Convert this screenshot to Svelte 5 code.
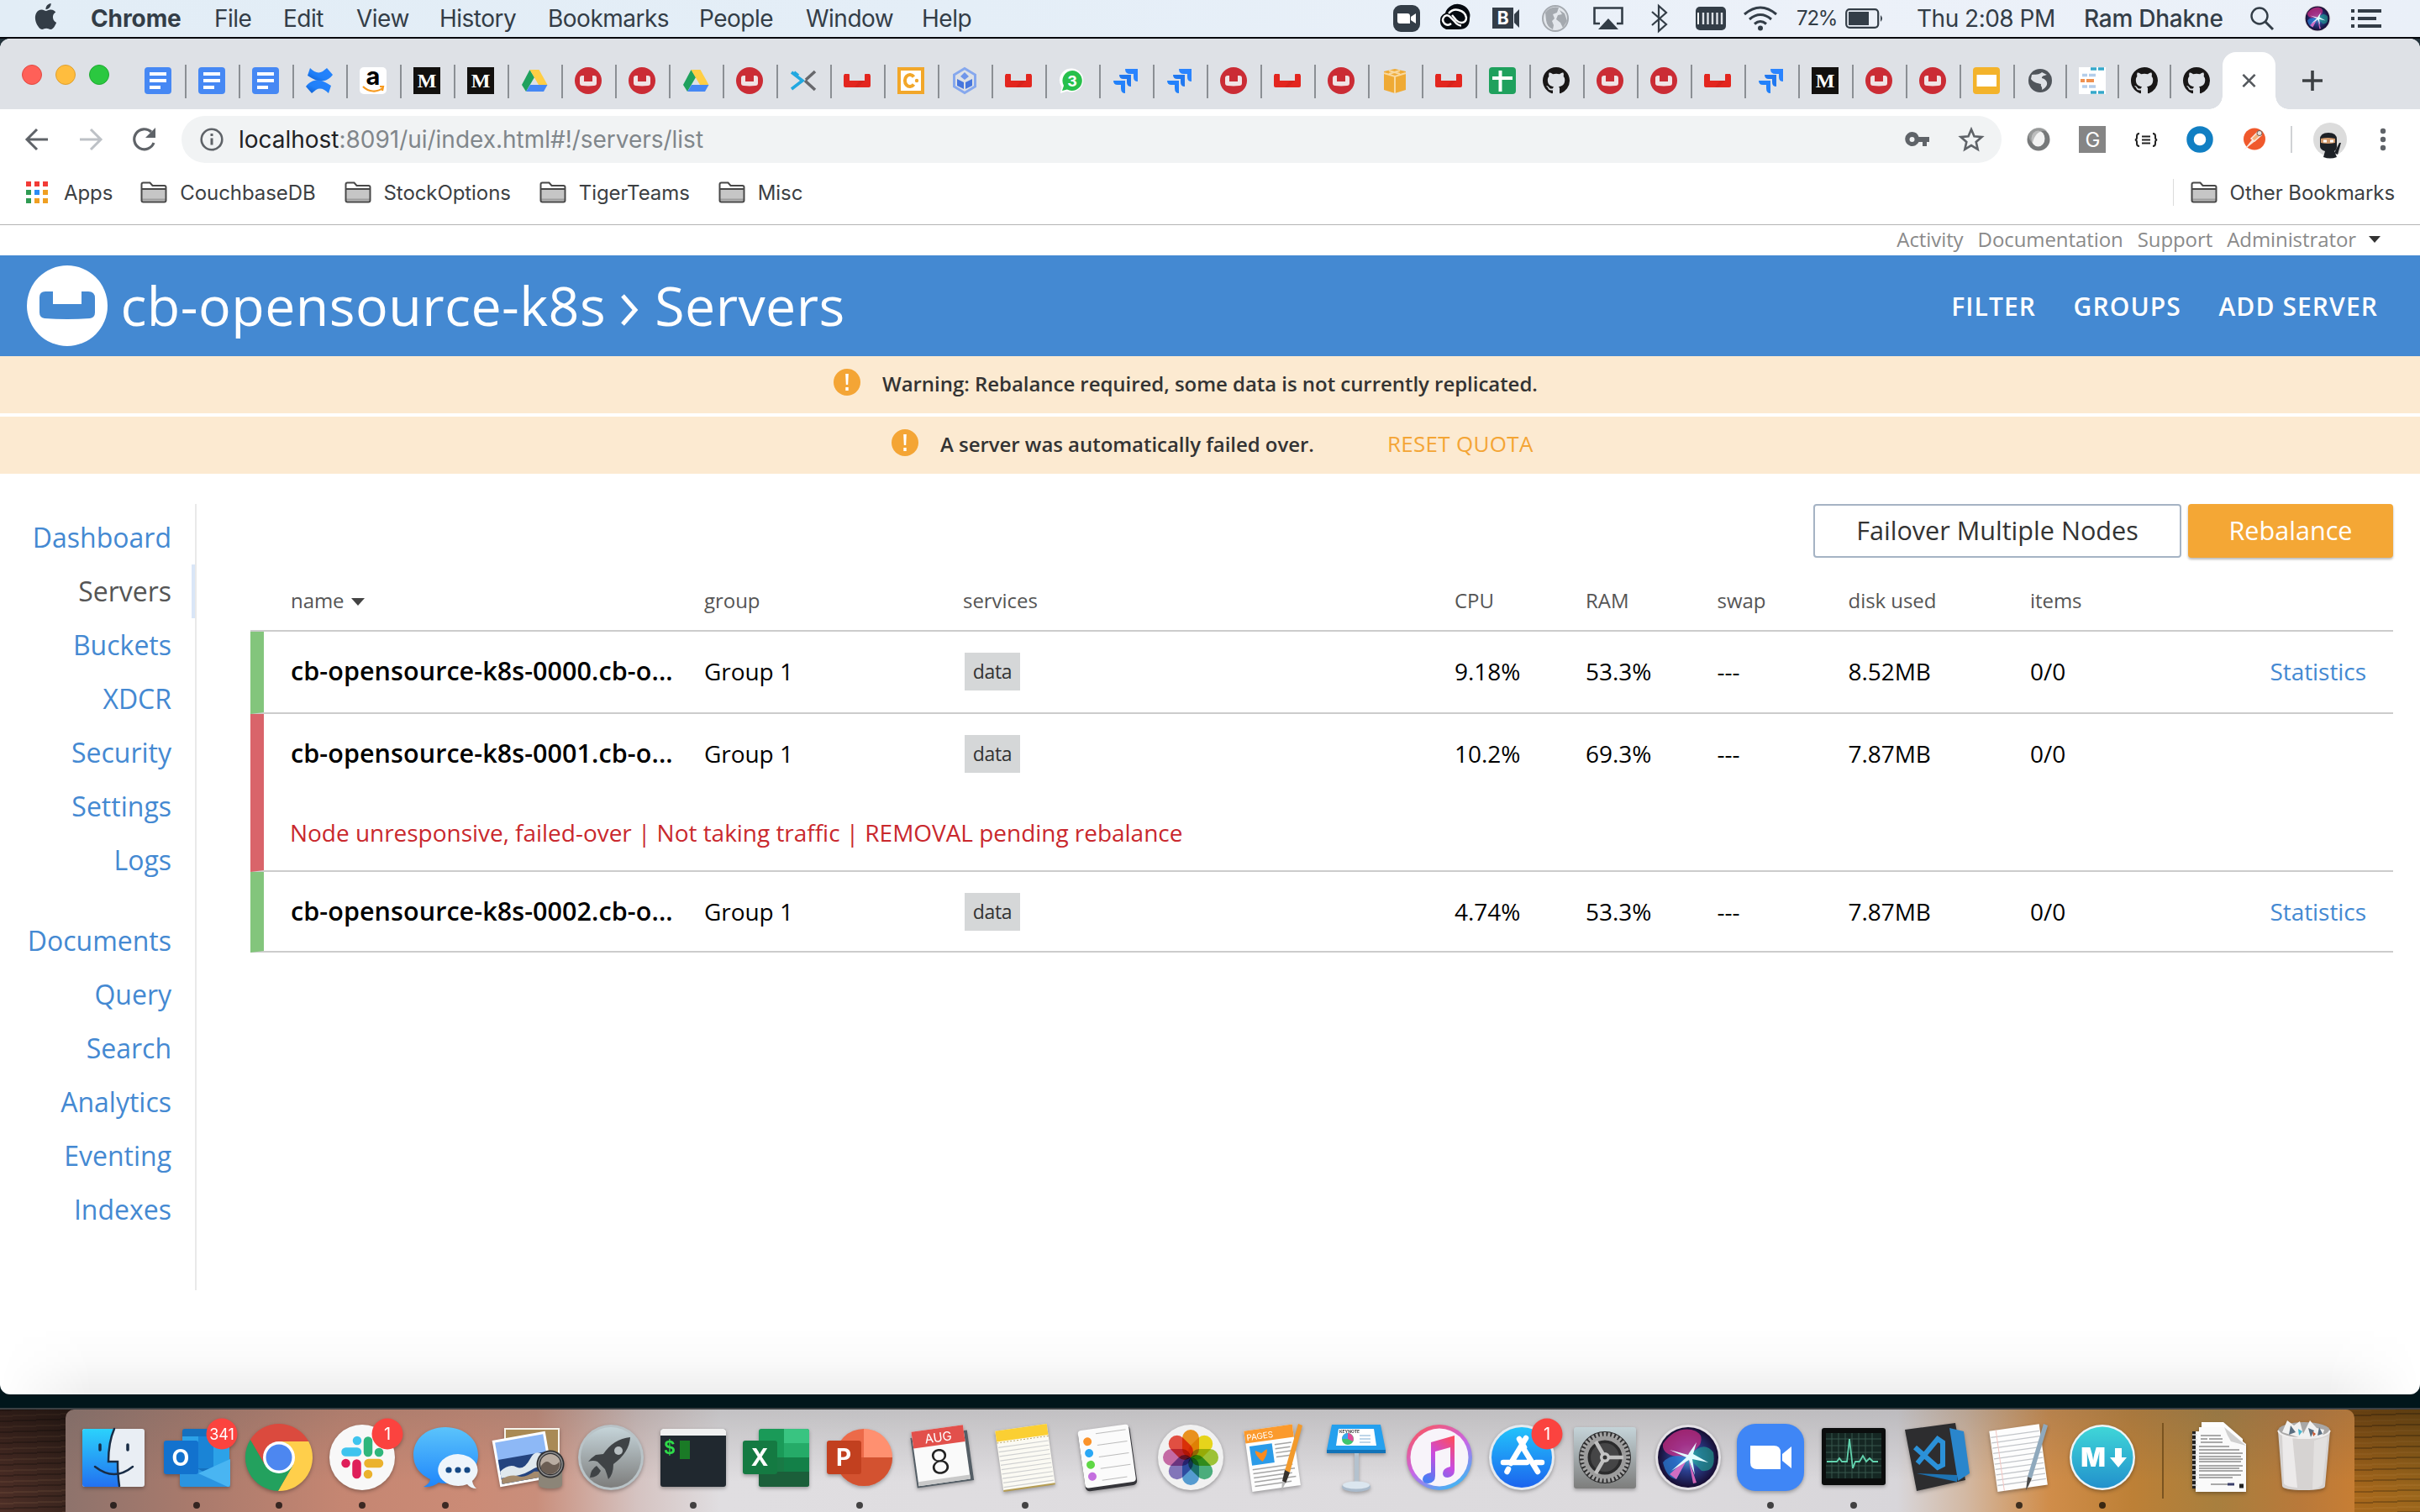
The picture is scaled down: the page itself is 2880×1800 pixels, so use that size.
<script>
  const menus = ['File', 'Edit', 'View', 'History', 'Bookmarks', 'People', 'Window', 'Help'];

  const tabs = [
    'docs', 'docs', 'docs', 'confluence', 'amazon', 'medium', 'medium', 'drive', 'couchbase', 'couchbase',
    'drive', 'couchbase', 'xmark', 'couch', 'coursera', 'cube', 'couch', 'whatsapp', 'jira', 'jira',
    'couchbase', 'couch', 'couchbase', 'aws', 'couch', 'sheets', 'github', 'couchbase', 'couchbase', 'couch',
    'jira', 'medium', 'couchbase', 'couchbase', 'slides', 'globe', 'logs', 'github', 'github'
  ];

  const bookmarks = ['CouchbaseDB', 'StockOptions', 'TigerTeams', 'Misc'];
  const navMain = ['Dashboard', 'Servers', 'Buckets', 'XDCR', 'Security', 'Settings', 'Logs'];
  const navData = ['Documents', 'Query', 'Search', 'Analytics', 'Eventing', 'Indexes'];

  const servers = [
    { name: 'cb-opensource-k8s-0000.cb-o...', group: 'Group 1', cpu: '9.18%', ram: '53.3%', swap: '---', disk: '8.52MB', items: '0/0', healthy: true },
    {
      name: 'cb-opensource-k8s-0001.cb-o...', group: 'Group 1', cpu: '10.2%', ram: '69.3%', swap: '---', disk: '7.87MB', items: '0/0', healthy: false,
      message: 'Node unresponsive, failed-over | Not taking traffic | REMOVAL pending rebalance'
    },
    { name: 'cb-opensource-k8s-0002.cb-o...', group: 'Group 1', cpu: '4.74%', ram: '53.3%', swap: '---', disk: '7.87MB', items: '0/0', healthy: true }
  ];

  const dock = [
    { app: 'finder', running: true }, { app: 'outlook', running: true, badge: '341' }, { app: 'chrome', running: true },
    { app: 'slack', running: true, badge: '1' }, { app: 'messages', running: true }, { app: 'preview' }, { app: 'launchpad' },
    { app: 'terminal', running: true }, { app: 'excel' }, { app: 'powerpoint', running: true }, { app: 'calendar' },
    { app: 'notes', running: true }, { app: 'reminders' }, { app: 'photos' }, { app: 'pages' }, { app: 'keynote' },
    { app: 'itunes' }, { app: 'appstore', badge: '1' }, { app: 'prefs' }, { app: 'siri' }, { app: 'zoom', running: true },
    { app: 'activity', running: true }, { app: 'vscode' }, { app: 'textedit', running: true }, { app: 'markdown', running: true }
  ];

  const eighths = [0, 45, 90, 135, 180, 225, 270, 315];
  const petals = ['#f79a1e', '#f4e11c', '#a6ce39', '#4fb783', '#5aa4dc', '#8a7cc4', '#d070ae', '#ee5346'];
  const teeth = Array.from({ length: 36 }, (_, i) => i * 10);
  const lines = [0, 1, 2, 3, 4, 5, 6, 7, 8, 9];
</script>

{#snippet favicon(name)}
  <svg class="fav" viewBox="0 0 32 32">
    {#if name === 'docs'}
      <rect width="32" height="32" rx="4" fill="#4688f4" />
      <path d="M6 8h20M6 16h20M6 24h13" stroke="#fff" stroke-width="4" />
    {:else if name === 'confluence'}
      <path d="M5 1c5 5 10 7 15 4l5-4 7 8c-6 8-15 10-25 4l-5-3z" fill="url(#jira)" />
      <path d="M27 31c-5-5-10-7-15-4l-5 4-7-8c6-8 15-10 25-4l5 3z" fill="url(#jira)" />
    {:else if name === 'amazon'}
      <rect width="32" height="32" rx="5" fill="#fff" />
      <text x="16" y="21" class="glyph" font-size="29" fill="#000">a</text>
      <path d="M4 23c7 7 17 7 23 2M24 23l4 0-1 5" fill="none" stroke="#f79a1e" stroke-width="2.2" />
    {:else if name === 'medium'}
      <rect width="32" height="32" fill="#12100e" />
      <text x="16" y="24" class="glyph serif" font-size="24" fill="#fff">M</text>
    {:else if name === 'drive'}
      <path d="M10.500 3 1 21l5 8L16 12z" fill="#1fa15d" />
      <path d="M10.500 3h11l10 18H21z" fill="#ffce44" />
      <path d="M11 21h20.500l-4.500 8H6z" fill="#4688f4" />
    {:else if name === 'couchbase'}
      <circle cx="16" cy="16" r="16" fill="#cb2c35" />
      <path d="M6 13q0-3 3-3h2v7h10v-7h2q3 0 3 3v6q0 3-3 3-7 .8-14 0-3 0-3-3z" fill="#f0e3e5" />
    {:else if name === 'xmark'}
      <path d="M2 6 15 16 2 26M5 6l5 4" fill="none" stroke="#22a8e0" stroke-width="3.600" />
      <path d="M30 5 19 15M30 27 18 16" stroke="#67686c" stroke-width="3.600" />
    {:else if name === 'couch'}
      <path d="M1 8h5q1 0 1 1v7h18V9q0-1 1-1h5l1 2v12q0 2-2 2H2q-2 0-2-2V10z" fill="#e3261f" />
      <path d="m13 24 6-8h6l-8 8z" fill="#c91f1a" opacity=".5" />
    {:else if name === 'coursera'}
      <rect width="32" height="32" fill="#f2a72a" />
      <rect x="4" y="4" width="24" height="24" fill="#fff" />
      <path d="M19.500 11.500a6 7 0 1 0 0 9" fill="none" stroke="#f2a72a" stroke-width="4" />
      <circle cx="23" cy="16" r="2.200" fill="#f2a72a" />
    {:else if name === 'cube'}
      <path d="M16 1.500 28.500 9v14L16 30.500 3.500 23V9z" fill="none" stroke="#86a8ee" stroke-width="3" />
      <path d="m16 6 5 5-5 4-5-4z" fill="#6f95ea" />
      <path d="m7 14 8 4v8l-8-4zM25 14l-8 4v8l8-4z" fill="#4877dd" />
    {:else if name === 'whatsapp'}
      <path d="M16 1.500a14 14 0 1 1-6 27L2 31l1.500-7.500A14 14 0 0 1 16 1.500z" fill="#fff" />
      <path d="M16 4a12 12 0 1 1-6 22.500L4 28l2-6A12 12 0 0 1 16 4z" fill="#27c04b" />
      <text x="16" y="22.500" class="glyph" font-size="18" fill="#fff">3</text>
    {:else if name === 'jira'}
      <path d="M15 2h15v15q-5 0-5-5V8h-4q-6 0-6-6z" fill="#2a84ff" />
      <path d="M8 9h14v14q-5 0-5-5v-4h-4q-5 0-5-5z" fill="#2178f0" />
      <path d="M1 16h14v15q-5 0-5-6v-4H6q-5 0-5-5z" fill="url(#jira)" />
    {:else if name === 'aws'}
      <path d="m3 5 13-3 13 3v22l-13 4-13-4z" fill="#efaa35" />
      <path d="m3 7 13 4 13-4M9 4l13 4M22 4 9 8M16 11v20" fill="none" stroke="#f8d9a0" stroke-width="2" />
    {:else if name === 'sheets'}
      <rect width="32" height="32" rx="4" fill="#1fa15d" />
      <path d="M4 13h24M13.500 4v25" stroke="#fff" stroke-width="4" />
    {:else if name === 'github'}
      <path transform="scale(2)" fill="#191717" d="M8 0C3.580 0 0 3.580 0 8c0 3.540 2.290 6.530 5.470 7.590.4.070.55-.17.55-.38 0-.19-.01-.82-.01-1.490-2.010.37-2.530-.49-2.690-.94-.09-.23-.48-.94-.82-1.130-.28-.15-.68-.52-.01-.53.63-.01 1.080.58 1.230.82.72 1.210 1.870.87 2.330.66.07-.52.28-.87.51-1.070-1.780-.2-3.640-.89-3.640-3.950 0-.87.31-1.590.82-2.150-.08-.2-.36-1.020.08-2.120 0 0 .67-.21 2.200.82.64-.18 1.320-.27 2-.27s1.360.09 2 .27c1.530-1.040 2.200-.82 2.200-.82.44 1.100.16 1.920.08 2.120.51.56.82 1.270.82 2.150 0 3.070-1.870 3.750-3.650 3.950.29.25.54.73.54 1.480 0 1.070-.01 1.930-.01 2.200 0 .21.15.46.55.38A8.010 8.010 0 0 0 16 8c0-4.420-3.580-8-8-8z" />
    {:else if name === 'slides'}
      <rect width="32" height="32" rx="4" fill="#f3b32b" />
      <rect x="4.500" y="9" width="23.500" height="14" fill="#fff" />
    {:else if name === 'globe'}
      <circle cx="16" cy="16" r="14" fill="#50555b" />
      <path d="M6 9c5-1 7 1 12-3l6 3c-3 1-6 1-6 4 4 1 7 4 6 8-1 3-4 5-6 6 1-4-2-4-1-7-4-1-8-1-12-6z" fill="#dee1e6" />
    {:else if name === 'logs'}
      <rect width="32" height="32" fill="#fff" />
      <path d="M14 2h7M23 2h7M14 30h7M23 30h7" stroke="#35a8ca" stroke-width="3.500" />
      <path d="M4 9.500h6M12 9.500h8M4 23h6M12 23h8" stroke="#b4cdea" stroke-width="3.500" />
      <path d="M2 16h5M9 16h9" stroke="#f09150" stroke-width="4" />
    {/if}
  </svg>
{/snippet}

{#snippet folder()}
  <svg class="folder" viewBox="0 0 32 26">
    <path d="M1.500 3.500q0-2 2-2h8l3 4h14q2 0 2 2v15q0 2-2 2h-25q-2 0-2-2z" fill="#fff" />
    <path d="M1.500 9h29v13.500q0 2-2 2h-25q-2 0-2-2z" fill="#c6c6c6" />
    <path d="M1.500 21.500h29" stroke="#9d9d9d" stroke-width="2" />
    <path d="M1.500 3.500q0-2 2-2h8l3 3.500h14q2 0 2 2v15.500q0 2-2 2h-25q-2 0-2-2zM1.500 9h29" fill="none" stroke="#484848" stroke-width="2" />
  </svg>
{/snippet}

{#snippet siri()}
  <circle cx="40" cy="40" r="39" fill="#e4e2e6" />
  <circle cx="40" cy="40" r="36" fill="url(#siribase)" />
  <path d="M40 40Q8 40 10 24 24 4 44 7q16 4 10 18z" fill="#d42c86" opacity=".7" />
  <path d="M40 40Q58 18 70 34q4 24-14 22z" fill="#1fa894" opacity=".6" />
  <path d="M40 40Q20 34 10 46q4 18 16 20z" fill="#2b7fd8" opacity=".7" />
  <path d="m40 40 6 31 4-1zM40 40 26 66l-8-6z" fill="#ee6fc4" opacity=".85" />
  <path d="m40 37-22-6 20 9-18 16 21-13 7 18-3-19 19 4-18-10 4-14-9 13z" fill="#e4fdff" />
{/snippet}

{#snippet dockIcon(app)}
  {#if app === 'finder'}
    <rect x="3" y="6" width="74" height="69" rx="3" fill="#e9eef4" />
    <path d="M41 6H6q-3 0-3 3v63q0 3 3 3h41q-2-14-2-29H34q0-24 7-40z" fill="url(#finder)" />
    <path d="M24 25v6M57 25v6" stroke="#182c45" stroke-width="3.500" stroke-linecap="round" />
    <path d="M18 51q23 18 45 0M41 6q-7 16-7 39h11q0 16 2 29" fill="none" stroke="#182c45" stroke-width="2.500" stroke-linecap="round" />
  {:else if app === 'outlook'}
    <rect x="23" y="6" width="56" height="60" rx="3" fill="#1470bf" />
    <path d="M23 15h56v36H23z" fill="#2ca2e8" />
    <path d="M42 15h18v18H42zM42 33h18v20H42z" fill="#1a84d6" />
    <path d="M20 42l60 32q0 1-2 1H23q-3 0-3-3z" fill="#2a94e0" />
    <path d="M80 42v30q0 3-3 3L42 59z" fill="#49b5f2" />
    <rect x="1" y="20" width="41" height="40" rx="3" fill="#1272ce" />
    <text x="21" y="50" class="glyph" font-size="27" fill="#fff">O</text>
  {:else if app === 'chrome'}
    <path d="M5.900 19A40 40 0 0 1 75.200 21H40L23.500 49.500z" fill="#db4a3e" />
    <path d="M75.200 21A40 40 0 0 1 38.900 80L56.500 49.500 40 21z" fill="#ffcf4b" />
    <path d="M38.900 80A40 40 0 0 1 5.900 19L23.500 49.500h33z" fill="#23a15e" />
    <circle cx="40" cy="40" r="19" fill="#fff" />
    <circle cx="40" cy="40" r="15.500" fill="#4d87f0" />
  {:else if app === 'slack'}
    <circle cx="40" cy="40" r="39" fill="#f8f8f8" />
    <g stroke-width="10.500" stroke-linecap="round">
      <path d="M20.500 33.500H34M34 20v.1" stroke="#3fc4ee" />
      <path d="M47 20.500v13.500M60 34h.1" stroke="#2fb67c" />
      <path d="M33.500 47.500v12.500M20.500 47h.1" stroke="#df1f5a" />
      <path d="M47.500 47H60M47 60v.1" stroke="#ebb22d" />
    </g>
  {:else if app === 'messages'}
    <path d="M40 4c22 0 39 14 39 33S62 71 40 71q-4 0-8-1-7 6-18 5 7-3 8-9C9 60 2 50 2 37 2 18 18 4 40 4z" fill="url(#sky)" />
    <path d="M55 36a24 19 0 0 1 17 32q1 6 5 9-7 0-11-5a24 19 0 1 1-11-36z" fill="#eef5fb" />
    <circle cx="44" cy="55" r="3.600" fill="#164a86" /><circle cx="55" cy="55" r="3.600" fill="#164a86" /><circle cx="66" cy="55" r="3.600" fill="#164a86" />
  {:else if app === 'preview'}
    <rect x="12" y="5" width="66" height="58" fill="#f6f3ea" />
    <rect x="14" y="7" width="62" height="54" fill="#a98a55" />
    <g transform="rotate(-10 34 42)">
      <rect x="2" y="14" width="64" height="56" fill="#fff" />
      <rect x="5" y="17" width="58" height="50" fill="#8db8f6" />
      <path d="M5 38h58v29H5z" fill="#24447f" />
      <path d="M5 52q12-8 20-2t18-7 20 4v7q-10-2-22 3T5 60z" fill="#dfe8ee" />
      <path d="M5 61q12-4 20 0t20-2l18 3v5H5z" fill="#a48a6c" />
    </g>
    <path d="M53 48h28v24q0 5-14 5t-14-5z" fill="#8c8578" />
    <circle cx="67" cy="48" r="16.500" fill="#2e2f31" />
    <circle cx="67" cy="48" r="14" fill="none" stroke="#8f8f90" stroke-width="1.500" />
    <circle cx="67" cy="48" r="12" fill="#b9ada2" />
    <path d="M56 50q6-8 11-3t11-2a12 12 0 0 1-22 9z" fill="#6b5e54" />
  {:else if app === 'launchpad'}
    <circle cx="40" cy="40" r="39" fill="#b9c3c7" />
    <circle cx="40" cy="40" r="36" fill="url(#steel)" />
    <path d="M63 16q-20 2-32 20l-9 1q-6 4-9 8 6-2 11 0l9 9q2 5 4 12 6-6 6-18 19-14 20-32z" fill="#3f4346" />
    <circle cx="49" cy="32" r="5" fill="#b8bfc2" />
    <path d="M23 50q-7 4-8 14 9 0 13-8z" fill="#3f4346" />
  {:else if app === 'terminal'}
    <rect x="1" y="6" width="78" height="69" rx="3" fill="#20282f" />
    <path d="M1 14V9q0-3 3-3h72q3 0 3 3v5z" fill="#f0f0f0" />
    <text x="12" y="36" class="glyph mono" font-size="23" fill="#2fdc4a">$</text>
    <rect x="24" y="20" width="12" height="22" fill="#1a7a26" />
  {:else if app === 'excel'}
    <rect x="19" y="6" width="60" height="69" rx="3" fill="#1a9a58" />
    <path d="M49 6h27q3 0 3 3v14H49z" fill="#39c481" /><path d="M49 23h30v17H49z" fill="#25ab68" />
    <path d="M19 40h30v17H19z" fill="#187a45" /><path d="M19 57h60v15q0 3-3 3H22q-3 0-3-3z" fill="#1b5f3a" /><path d="M49 40h30v17H49z" fill="#138048" />
    <rect y="20" width="41" height="40" rx="3" fill="#147a42" />
    <text x="20" y="50" class="glyph" font-size="28" fill="#fff">X</text>
  {:else if app === 'powerpoint'}
    <path d="M45 6v34h34a34 34 0 0 0-34-34z" fill="#ff9070" />
    <path d="M45 6a34 34 0 1 0 34 34z" fill="#ec6a49" />
    <path d="M45 6v34h34a34 34 0 0 0-34-34z" fill="#ff9070" />
    <path d="M11 40a34 34 0 0 0 68 0z" fill="#d35230" />
    <rect x="1" y="20" width="41" height="40" rx="3" fill="#c2401f" />
    <text x="21" y="50" class="glyph" font-size="28" fill="#fff">P</text>
  {:else if app === 'calendar'}
    <g transform="rotate(-8 40 40)">
      <path d="M6 12h68v60H6z" fill="#545e66" />
      <rect x="8" y="5" width="62" height="65" fill="#fafafa" />
      <path d="M8 5h62v20H8z" fill="#e2504b" />
      <path d="M8 65h62v5H8z" fill="#c9c9c9" />
      <text x="39" y="21" class="glyph plain" font-size="15" fill="#fff">AUG</text>
      <text x="37" y="59" class="glyph light" font-size="40" fill="#222">8</text>
    </g>
  {:else if app === 'notes'}
    <g transform="rotate(-8 40 40)">
      <rect x="9" y="4" width="62" height="72" fill="#fbfaf3" />
      <rect x="9" y="4" width="62" height="13" fill="#fbcf33" />
      <path d="M9 18.500h62" stroke="#b9a566" stroke-dasharray="2 2" />
      {#each lines as n}<path d={`M10 ${24 + n * 5.3}h60`} stroke="#cfd0d0" stroke-width="1.200" />{/each}
      <path d="M9 76h62" stroke="#b59c51" stroke-width="2" />
    </g>
  {:else if app === 'reminders'}
    <g transform="rotate(-8 40 40)">
      <rect x="9" y="5" width="62" height="72" rx="5" fill="#35353a" />
      <rect x="9" y="4" width="61" height="69" rx="4" fill="#fbfbfb" />
      <circle cx="19" cy="18" r="5" fill="#fb932a" /><circle cx="19" cy="32" r="5" fill="#2ba8f5" /><circle cx="19" cy="46" r="5" fill="#5fd845" /><circle cx="19" cy="60" r="5" fill="#c46fdf" />
      <path d="M30 10h36M30 24h36M30 38h36M30 52h36M30 66h30" stroke="#bcbcbc" />
    </g>
  {:else if app === 'photos'}
    <circle cx="40" cy="40" r="39" fill="#f1f1f1" />
    <g class="multiply">
      {#each eighths as a, i}<rect x="30" y="7" width="20" height="33" rx="10" fill={petals[i]} transform={`rotate(${a} 40 40)`} />{/each}
    </g>
  {:else if app === 'pages'}
    <g transform="rotate(-8 40 40)">
      <rect x="9" y="4" width="58" height="73" fill="#fdfdfd" />
      <rect x="9" y="4" width="58" height="15" fill="#fb9a2c" />
      <text x="27" y="16" class="glyph plain" font-size="10" fill="#fff">PAGES</text>
      <rect x="13" y="23" width="27" height="23" fill="#2b9be8" />
      <path d="M26 43q-8-8-7-14l7 4 7-4q1 6-7 14z" fill="#fb8a1e" />
      <path d="M43 25h20M43 30h18M43 35h20M43 40h19M13 51h48M13 56h50M13 61h46M13 66h50M13 71h44" stroke="#a5a5a5" stroke-width="1.500" />
    </g>
    <path d="m69 0 5 2-15 56-6-2z" fill="#f29a2c" /><path d="m53 55 6 3-5 13-4-3z" fill="#36322e" /><path d="m50 68 4 2-5 10z" fill="#b8b8b8" />
  {:else if app === 'keynote'}
    <path d="M11 1h58l6 30H5z" fill="#25a0ee" />
    <path d="M5 31h70v4H5z" fill="#1273b8" />
    <path d="M19 6h42l3 20H16z" fill="#fff" />
    <text x="32" y="11" class="glyph" font-size="5" fill="#444">KEYNOTE</text>
    <circle cx="30" cy="18" r="7" fill="#3ec56e" /><path d="M30 18V11a7 7 0 0 1 6 10z" fill="#e04d9a" /><path d="M30 18h-7a7 7 0 0 1 7-7z" fill="#39a7ee" />
    <path d="M44 14h13M44 18h13M44 22h13" stroke="#a9c9e2" stroke-width="1.500" />
    <path d="M38 35h5v38h-5z" fill="#b4c2ce" />
    <ellipse cx="40" cy="75" rx="17" ry="6" fill="#a9bacb" /><ellipse cx="40" cy="73" rx="16" ry="4.500" fill="#dbe6ef" />
  {:else if app === 'itunes'}
    <circle cx="40" cy="40" r="39" fill="url(#tunesring)" />
    <circle cx="40" cy="40" r="34.500" fill="#f8f4fa" />
    <path d="M30 22 58 14v41q0 8-8 9-6 0-6-5 0-6 9-8V28l-18 5v29q0 8-8 9-7 0-7-5 0-6 10-8z" fill="url(#tunes)" />
  {:else if app === 'appstore'}
    <circle cx="40" cy="40" r="39" fill="#e6eaef" />
    <circle cx="40" cy="40" r="36" fill="url(#store)" />
    <g stroke="#fff" stroke-width="6.500" stroke-linecap="round">
      <path d="M37 18 43 28M45 17 27 47M40 26 59 57M18 46h28M57 46h7M24 54l-1.500 3" />
    </g>
  {:else if app === 'prefs'}
    <rect x="3" y="4" width="74" height="73" rx="3" fill="url(#steel)" />
    <circle cx="40" cy="40" r="31" fill="#2b2b2c" />
    {#each teeth as a}<path d="M38.500 10h3v6h-3z" fill="#a5a5a5" transform={`rotate(${a} 40 40)`} />{/each}
    <circle cx="40" cy="40" r="23" fill="none" stroke="#9c9c9c" stroke-width="5" />
    <circle cx="40" cy="40" r="17" fill="#454546" />
    <path d="M40 40h22M40 40 29 21M40 40 29 59" stroke="#bfbfbf" stroke-width="4.500" />
    <circle cx="40" cy="40" r="6" fill="#c4c4c4" /><circle cx="40" cy="40" r="2.500" fill="#333" />
  {:else if app === 'siri'}
    {@render siri()}
  {:else if app === 'zoom'}
    <rect width="80" height="80" rx="22" fill="#3f86f6" />
    <path d="M16 26h28q8 0 8 8v20H24q-8 0-8-8z" fill="#fff" /><path d="M54 36l11-9v26l-11-9z" fill="#fff" />
  {:else if app === 'activity'}
    <rect x="2" y="5" width="76" height="68" rx="3" fill="#0b0d0d" /><rect x="7" y="11" width="66" height="54" fill="#152723" />
    <path d="M14 11v54M22 11v54M30 11v54M38 11v54M46 11v54M54 11v54M62 11v54M7 18h66M7 26h66M7 34h66M7 42h66M7 50h66M7 58h66" stroke="#36564c" />
    <path d="M8 45h12l3-4 3 4h6l3-27 4 35 3-8h5l4-7 4 7 4-4 4 4h6" fill="none" stroke="#62d3ae" stroke-width="1.800" />
  {:else if app === 'vscode'}
    <path d="m3 7 60-8 12 68-58 13z" fill="#2d2d2f" /><path d="m56 5 17 4 7 50-14 9z" fill="#2a86cc" />
    <path d="m15 28 27 24 6-3V22l-6-4-24 29" fill="none" stroke="#2b91d8" stroke-width="6" />
    <path d="m17 59 48 2v8z" fill="#1d74b5" />
  {:else if app === 'textedit'}
    <g transform="rotate(-8 40 40)">
      <rect x="9" y="4" width="60" height="73" fill="#fdfdfd" />
      {#each lines as n}<path d={`M10 ${12 + n * 6.4}h58`} stroke="#c3c6ca" stroke-width="1.300" />{/each}
      <path d="M17 4v73" stroke="#f3c6c2" />
    </g>
    <path d="m69 0 5 2-19 63-5-2z" fill="#8fa9bd" /><path d="m50 63 5 2-4 9-3 5z" fill="#4c4c4c" />
  {:else if app === 'markdown'}
    <circle cx="40" cy="40" r="39" fill="#eef4f6" /><circle cx="40" cy="40" r="36.500" fill="url(#mark)" />
    <text x="29" y="51" class="glyph heavy" font-size="31" fill="#fff">M</text>
    <path d="M55 29h8v11h6L59 52 49 40h6z" fill="#fff" />
  {:else if app === 'document'}
    <path d="M17-2h26l23 20v57H17z" fill="#fdfdfd" /><path d="M6 9h6v68H6z" fill="#222" /><path d="M14 4h30l26 20v57H10V9h4z" fill="#fafafa" />
    <path d="m44 4 26 22-18-5q-5-8-8-17z" fill="#d0d0d0" />
    <path d="M6 13h6M6 19h6M6 25h6M6 31h6M6 37h6M6 43h6M6 49h6M6 55h6M6 61h6M6 67h6M6 73h6" stroke="#ddd" stroke-width="1.500" />
    <path d="M16 14h24M16 18h8M26 18h16M16 22h26M14 27h36M14 31h48M14 35h52M14 39h50M14 42h52M14 45h50M14 50h52M14 53h48M14 56h52M14 61h50M14 64h40M28 72h24" stroke="#8e8e8e" stroke-width="1.500" />
    <path d="M48 72h8" stroke="#3a3f6a" stroke-width="3" /><path d="M62 74h5" stroke="#222" stroke-width="5" />
  {:else if app === 'trash'}
    <path d="M9 8h62l-6 66q0 5-25 5t-26-5z" fill="#d6d3d2" /><path d="M14 14h12l6 62q-14-1-16-5z" fill="#eceaea" /><path d="M52 20l16-5-6 57q-4 5-12 6z" fill="#e2e0df" />
    <ellipse cx="40" cy="8" rx="31" ry="10" fill="#a9a7a6" />
    <path d="m14 10 6-14 8 6 7-5 4 15 8-16 8 9 9 2-2 7-22 4z" fill="#f1f1f1" />
    <path d="m24 2 6 8-8 3zM45 5l7 3-4 8zM58 4l4 8-6 2z" fill="#5a6e80" /><path d="m33 6 5 3-4 5z" fill="#48b7d0" /><path d="m50 9 4 3-3 3z" fill="#c5532c" />
    <path d="M9 8q4 9 31 9t31-9" fill="none" stroke="#f0eeee" stroke-width="2" />
  {/if}
{/snippet}

<svg class="defs" width="0" height="0">
  <defs>
    <linearGradient id="jira" x1="1" y1="0" x2="0" y2="1"><stop offset="0" stop-color="#2684ff" /><stop offset=".6" stop-color="#2080f8" /><stop offset="1" stop-color="#0a58c8" /></linearGradient>
    <linearGradient id="finder" x2="0" y2="1"><stop stop-color="#2bd2fc" /><stop offset="1" stop-color="#2271f0" /></linearGradient>
    <linearGradient id="sky" x2="0" y2="1"><stop stop-color="#5bc4fb" /><stop offset="1" stop-color="#1f86fb" /></linearGradient>
    <linearGradient id="steel" x2="0" y2="1"><stop stop-color="#c5d4d9" /><stop offset="1" stop-color="#7d7d7c" /></linearGradient>
    <linearGradient id="store" x2="0" y2="1"><stop stop-color="#22c3fb" /><stop offset="1" stop-color="#1c64ee" /></linearGradient>
    <linearGradient id="mark" x2="0" y2="1"><stop stop-color="#3fd6d8" /><stop offset="1" stop-color="#2291cc" /></linearGradient>
    <linearGradient id="tunes" x1=".8" y1="0" x2=".3" y2="1"><stop stop-color="#fb4c63" /><stop offset=".5" stop-color="#c94be0" /><stop offset="1" stop-color="#4a7df5" /></linearGradient>
    <linearGradient id="tunesring" x1=".2" y1="0" x2=".8" y2="1"><stop stop-color="#fb5560" /><stop offset=".5" stop-color="#c766e8" /><stop offset="1" stop-color="#2fc0f6" /></linearGradient>
    <radialGradient id="siribase"><stop stop-color="#4ab5dc" /><stop offset=".45" stop-color="#2b3f8f" /><stop offset="1" stop-color="#170d33" /></radialGradient>
  </defs>
</svg>

<div class="screen">
  <header class="menubar">
    <nav class="menus">
      <svg class="apple" viewBox="0 0 24 24"><path fill="#333d47" d="M12.152 6.896c-.948 0-2.415-1.078-3.960-1.040-2.040.027-3.910 1.183-4.961 3.014-2.117 3.675-.546 9.103 1.519 12.090 1.013 1.454 2.208 3.090 3.792 3.039 1.520-.065 2.090-.987 3.935-.987 1.831 0 2.350.987 3.960.948 1.637-.026 2.676-1.480 3.676-2.948 1.156-1.688 1.636-3.325 1.662-3.415-.039-.013-3.182-1.221-3.220-4.857-.026-3.040 2.480-4.494 2.597-4.559-1.429-2.090-3.623-2.324-4.390-2.376-2-.156-3.675 1.090-4.610 1.090zM15.530 3.830c.843-1.012 1.400-2.427 1.245-3.830-1.207.052-2.662.805-3.532 1.818-.78.896-1.454 2.338-1.273 3.714 1.338.104 2.715-.688 3.559-1.701" /></svg>
      <strong>Chrome</strong>
      {#each menus as m}<span>{m}</span>{/each}
    </nav>
    <div class="status">
      <svg width="32" height="32" viewBox="0 0 32 32"><rect width="32" height="32" rx="9" fill="#333d47" /><path d="M5 10h12q3 0 3 3v9H8q-3 0-3-3zM21 14l6-4v12l-6-4z" fill="#fff" /></svg>
      <svg width="40" height="30" viewBox="0 0 40 30"><path d="M11 28a10.500 10.500 0 0 1-1-19.500A14 13 0 0 1 39 15q0 13-13 13z" fill="#050a10" /><path d="M29 23.500q-4 0-8-5l-6-6q-3-2.500-6 0-4 4 0 8.500 4 3.500 8 0M14 9q5-6 12-4 8 2 9 9 0 6-6 6-3 0-6-3l-5-6" fill="none" stroke="#fff" stroke-width="2.400" /></svg>
      <svg width="32" height="26" viewBox="0 0 32 26"><rect width="25" height="25" fill="#333d47" /><path d="m26 8 6-6v22l-6-6z" fill="#333d47" /><text x="12.500" y="20" class="glyph" font-size="21" fill="#fff">B</text></svg>
      <svg width="32" height="32" viewBox="0 0 32 32"><circle cx="16" cy="16" r="15" fill="#e3e7ec" stroke="#a4a9af" stroke-width="2" /><path d="M4 9Q10 1 20 3l-2 6-5 2 2 5-3 3 2 5-1 5Q6 26 5 18zM21 6l6 4 3 9-5 8-3-6-5-4 2-5 5-1z" fill="#a4a9af" /></svg>
      <svg width="36" height="28" viewBox="0 0 36 28"><path d="M8 20H1.500V1.500h33V20H28" fill="none" stroke="#333d47" stroke-width="2.600" /><path d="m18 14 12 13H6z" fill="#333d47" /></svg>
      <svg width="22" height="32" viewBox="0 0 22 32"><path d="m2 8 17 15-9 8V1l9 8L2 24" fill="none" stroke="#333d47" stroke-width="2.200" /></svg>
      <svg width="36" height="28" viewBox="0 0 36 28"><rect width="36" height="28" rx="5" fill="#333d47" /><path d="M3 7q0 14 0 14" stroke="#fff" stroke-width="2" /><path d="M9 7v14M14.500 7v14M20 7v14M25.500 7v14M31 7v14" stroke="#dfe3e8" stroke-width="2.400" /></svg>
      <svg width="42" height="30" viewBox="0 0 42 30"><path d="M2 10Q21-6 40 10M8 16q13-11 26 0M14 21.500q7-6 14 0" fill="none" stroke="#333d47" stroke-width="3" /><circle cx="21" cy="26.500" r="3" fill="#333d47" /></svg>
      <span class="percent">72%</span>
      <svg width="46" height="24" viewBox="0 0 46 24"><rect x="1.200" y="1.200" width="38" height="21.600" rx="4" fill="none" stroke="#333d47" stroke-width="2.200" /><rect x="4" y="4" width="24" height="16" fill="#333d47" /><path d="M42 8q4 4 0 8z" fill="#333d47" /></svg>
      <span class="clock">Thu 2:08 PM</span>
      <span class="user">Ram Dhakne</span>
      <svg width="30" height="30" viewBox="0 0 30 30"><circle cx="12" cy="12" r="9.500" fill="none" stroke="#333d47" stroke-width="2.400" /><path d="m19 19 9 9" stroke="#333d47" stroke-width="3" /></svg>
      <svg width="32" height="32" viewBox="0 0 80 80">{@render siri()}</svg>
      <svg width="36" height="22" viewBox="0 0 36 22"><path d="M0 2h4M0 11h4M0 20h4M8 2h28M8 11h22M8 20h28" stroke="#333d47" stroke-width="4" /></svg>
    </div>
  </header>

  <div class="backdrop">
    <section class="browser">
      <div class="tabstrip">
        <div class="lights"><i class="close"></i><i class="min"></i><i class="max"></i></div>
        {#each tabs as t, i}
          <div class="tab" class:narrow={i >= 35} class:last={i === 38}>{@render favicon(t)}</div>
        {/each}
        <div class="tab-active">
          <svg width="17" height="18" viewBox="0 0 18 18"><path d="m1.500 1.500 15 15M16.500 1.500l-15 15" stroke="#54585d" stroke-width="2.800" /></svg>
        </div>
        <svg class="plus" width="24" height="24" viewBox="0 0 24 24"><path d="M12 0v24M0 12h24" stroke="#3c4043" stroke-width="3.600" /></svg>
      </div>

      <div class="toolbar">
        <svg width="32" height="32" viewBox="0 0 32 32"><path d="M29 16H5M16 4 4 16l12 12" fill="none" stroke="#5f6368" stroke-width="3" /></svg>
        <svg width="32" height="32" viewBox="0 0 32 32"><path d="M3 16h24M16 4l12 12-12 12" fill="none" stroke="#bdc1c6" stroke-width="3" /></svg>
        <svg width="32" height="32" viewBox="0 0 32 32"><path d="M27 20a12 12 0 1 1-3-13" fill="none" stroke="#5f6368" stroke-width="3.200" /><path d="M29 2v12H17z" fill="#5f6368" /></svg>
        <div class="omnibox">
          <svg width="28" height="28" viewBox="0 0 28 28"><circle cx="14" cy="14" r="12.300" fill="none" stroke="#5f6368" stroke-width="2.600" /><path d="M14 12.500v8M14 7v3" stroke="#5f6368" stroke-width="3" /></svg>
          <span class="url"><b>localhost</b>:8091/ui/index.html#!/servers/list</span>
          <svg width="30" height="20" viewBox="0 0 30 20"><path d="M8.500 1a8.500 8.500 0 0 1 8 6H29v6h-3v5h-5v-5h-4.500a8.500 8.500 0 1 1-8-12zm0 6a3 3 0 1 0 0 6 3 3 0 0 0 0-6z" fill="#5f6368" /></svg>
          <svg width="30" height="30" viewBox="0 0 30 30"><path d="m15 3 3.500 8.300 9 .8-6.800 5.900 2 8.800-7.700-4.700-7.700 4.700 2-8.800-6.800-5.900 9-.8z" fill="none" stroke="#5f6368" stroke-width="2.600" /></svg>
        </div>
        <div class="extensions">
          <svg width="32" height="32" viewBox="0 0 32 32"><circle cx="16" cy="16" r="13.500" fill="#77797a" /><ellipse cx="15.500" cy="15" rx="8" ry="9.500" fill="#f2f2f2" /><path d="M4 12A13 13 0 0 1 26 6q-13-2-17 14-4-3-5-8z" fill="#a5a6a6" opacity=".7" /></svg>
          <svg width="32" height="32" viewBox="0 0 32 32"><rect width="32" height="32" fill="#858585" /><text x="16.500" y="25" class="glyph plain" font-size="24" fill="#fff">G</text></svg>
          <svg width="32" height="32" viewBox="0 0 32 32"><path d="M8 9q-3 0-3 3v2q0 2-2 2.500 2 .5 2 2.500v2q0 3 3 3M24 9q3 0 3 3v2q0 2 2 2.500-2 .5-2 2.500v2q0 3-3 3M11 12.500h10M11 16.500h10M11 20.500h10" fill="none" stroke="#222" stroke-width="2" /></svg>
          <svg width="32" height="32" viewBox="0 0 32 32"><circle cx="16" cy="16" r="11.500" fill="#fff" stroke="#117fc3" stroke-width="8.500" /></svg>
          <svg width="32" height="32" viewBox="0 0 32 32"><circle cx="17" cy="15.500" r="13" fill="#f0592c" /><path d="M4 29 16 14l3 3z" fill="#fbe9df" /><path d="m13 15 8-8 4 4-8 7z" fill="#f5b27c" stroke="#fbe9df" stroke-width="1.500" /><circle cx="23" cy="8.500" r="3" fill="#e8e0da" stroke="#6a5850" /></svg>
        </div>
        <i class="rule"></i>
        <svg width="40" height="40" viewBox="0 0 40 40"><circle cx="20" cy="20" r="20" fill="#dcdcdc" /><path d="M8 20q0-8 10-8t10 8v9q0 3-3 5l3 7q-8 3-16 0l2-7q-6-2-6-6z" fill="#1d2126" /><path d="M9 19q8-2 17 0v5q-9 2-17 0z" fill="#d39a6b" /><path d="M12 22h4M20 22h4" stroke="#fff" stroke-width="3" /><path d="m33 24-4 14-4-2 6-12z" fill="#1d2126" /></svg>
        <svg class="kebab" width="8" height="28" viewBox="0 0 8 28"><circle cx="4" cy="4" r="3.200" fill="#5f6368" /><circle cx="4" cy="14" r="3.200" fill="#5f6368" /><circle cx="4" cy="24" r="3.200" fill="#5f6368" /></svg>
      </div>

      <div class="bookmarks">
        <svg class="apps" width="26" height="26" viewBox="0 0 26 26">
          <path d="M0 3h6M10 3h6M20 3h6" stroke="#f23b36" stroke-width="6" />
          <path d="M0 13h6" stroke="#2f9b53" stroke-width="6" /><path d="M10 13h6" stroke="#2a8cf4" stroke-width="6" /><path d="M20 13h6M10 23h6M20 23h6" stroke="#ef9f22" stroke-width="6" /><path d="M0 23h6" stroke="#2f9b53" stroke-width="6" />
        </svg>
        <span class="apps-label">Apps</span>
        {#each bookmarks as b}<span class="bm">{@render folder()}{b}</span>{/each}
        <span class="bm other">{@render folder()}Other Bookmarks</span>
      </div>

      <div class="app">
        <div class="account">
          <span>Activity</span><span>Documentation</span><span>Support</span><span>Administrator</span>
          <i class="caret"></i>
        </div>
        <div class="titlebar">
          <svg class="brand" width="96" height="96" viewBox="0 0 96 96"><circle cx="48" cy="48" r="48" fill="#fff" /><path d="M15 38q0-7 7-7h9v15h34V31h8q8 0 8 8v17q0 6-6 7-27 2-54 0-6-1-6-7z" fill="#4489d2" /></svg>
          <h1>cb-opensource-k8s
            <svg class="chev" width="22" height="38" viewBox="0 0 22 38"><path d="m3 2 15 17L3 36" fill="none" stroke="#fff" stroke-width="5" /></svg>
            Servers</h1>
          <nav class="actions"><a href="#filter">FILTER</a><a href="#groups">GROUPS</a><a href="#add">ADD SERVER</a></nav>
        </div>

        <div class="alert first">
          <svg width="32" height="32" viewBox="0 0 32 32"><circle cx="16" cy="16" r="16" fill="#f4a535" /><path d="M14.200 6h3.600l-.6 13h-2.400zM14.300 22h3.400v4h-3.400z" fill="#fff" /></svg>
          <span>Warning: Rebalance required, some data is not currently replicated.</span>
        </div>
        <div class="alert second">
          <svg width="32" height="32" viewBox="0 0 32 32"><circle cx="16" cy="16" r="16" fill="#f4a535" /><path d="M14.200 6h3.600l-.6 13h-2.400zM14.300 22h3.400v4h-3.400z" fill="#fff" /></svg>
          <span>A server was automatically failed over.</span>
          <a href="#reset">RESET QUOTA</a>
        </div>

        <div class="body">
          <aside>
            {#each navMain as n}<a class:current={n === 'Servers'} href="#nav">{n}</a>{/each}
            <div class="gap"></div>
            {#each navData as n}<a href="#nav">{n}</a>{/each}
          </aside>
          <section class="content">
            <div class="buttons">
              <button class="outline">Failover Multiple Nodes</button>
              <button class="primary">Rebalance</button>
            </div>
            <div class="cols head">
              <span>name <i class="caret"></i></span><span>group</span><span>services</span><span>CPU</span><span>RAM</span><span>swap</span><span>disk used</span><span>items</span>
            </div>
            {#each servers as s}
              <div class="server" class:down={!s.healthy}>
                <div class="cols">
                  <strong>{s.name}</strong>
                  <span>{s.group}</span>
                  <span class="badge">data</span>
                  <span>{s.cpu}</span><span>{s.ram}</span><span>{s.swap}</span><span>{s.disk}</span><span>{s.items}</span>
                  {#if s.healthy}<a href="#stats">Statistics</a>{/if}
                </div>
                {#if s.message}<p>{s.message}</p>{/if}
              </div>
            {/each}
          </section>
        </div>
      </div>
    </section>
  </div>

  <footer class="desktop">
    <div class="dock">
      {#each dock as d}
        <div class="slot">
          <svg class="icon" viewBox="0 0 80 80">
            {@render dockIcon(d.app)}
            {#if d.badge}
              <circle cx="70" cy="12" r="18.500" fill="#fb433f" />
              <text x="70" y="19" class="glyph plain" font-size={d.badge.length > 1 ? 18 : 20} fill="#fff">{d.badge}</text>
            {/if}
          </svg>
          <i class="dot" class:on={d.running}></i>
        </div>
      {/each}
      <i class="divider"></i>
      <div class="slot"><svg class="icon" viewBox="0 0 80 80">{@render dockIcon('document')}</svg><i class="dot"></i></div>
      <div class="slot"><svg class="icon" viewBox="0 0 80 80">{@render dockIcon('trash')}</svg><i class="dot"></i></div>
    </div>
  </footer>
</div>

<style>
  :global(body) { margin: 0; background: #01161b; }
  .defs { position: absolute; }
  svg { flex: none; overflow: visible; display: block; }
  a { text-decoration: none; color: inherit; }
  .glyph { font-family: Inter, sans-serif; font-weight: 700; text-anchor: middle; }
  .plain { font-weight: 400; }
  .light { font-weight: 300; }
  .heavy { font-weight: 900; }
  .serif { font-family: 'Liberation Serif', serif; }
  .mono { font-family: 'Liberation Mono', monospace; }
  .multiply rect { mix-blend-mode: multiply; }

  .screen { width: 2880px; height: 1800px; overflow: hidden; display: flex; flex-direction: column; font-family: Inter, sans-serif; }

  .menubar {
    flex: none; height: 44px; border-bottom: 2px solid #05080d; display: flex; justify-content: space-between;
    background: linear-gradient(90deg, #e2edf6, #e4eef7 40%, #ecf1f9 75%, #eaf0f8);
    color: #333d47; font-size: 28px; line-height: 44px; letter-spacing: -0.5px; white-space: nowrap;
  }
  .menus { display: grid; grid-template-columns: 68px 147px 82px 87px 99px 129px 180px 127px 138px 80px; padding-left: 40px; }
  .menus strong { letter-spacing: -0.1px; }
  .apple { width: 31px; height: 31px; margin: 4px 0 0 -1px; }
  .status {
    display: grid; align-items: center; justify-items: center; padding-right: 56px;
    grid-template-columns: 64px 48px 76px 42px 84px 38px 84px 34px 84px 46px 237px 197px 32px 100px 16px;
  }
  .status span { justify-self: start; }
  .status .percent { padding-left: 26px; font-size: 24px; letter-spacing: -1.2px; }
  .status .clock { padding-left: 39px; letter-spacing: -0.5px; }
  .status .user { padding-left: 1px; font-weight: 500; letter-spacing: -0.25px; }

  .backdrop { flex: none; height: 1614px; padding-bottom: 16px; background: linear-gradient(#28363f, #01161b 30px); border-radius: 0 0 12px 12px; }
  .browser { height: 1614px; background: #fff; border-radius: 12px; overflow: hidden; display: flex; flex-direction: column; }

  .tabstrip { height: 84px; flex: none; background: #dee1e6; display: flex; }
  .lights { width: 158px; display: flex; gap: 16px; padding: 31px 0 0 26px; box-sizing: border-box; }
  .lights i { width: 22px; height: 22px; border-radius: 50%; border: 1px solid; }
  .lights .close { background: #ff6058; border-color: #e14942; }
  .lights .min { background: #ffbd3e; border-color: #dfa02e; }
  .lights .max { background: #2bc840; border-color: #1fa931; }
  .tab { width: 64px; height: 40px; margin-top: 31px; box-sizing: border-box; border-right: 2px solid #8b8f94; padding: 3px 0 0 14px; }
  .tab.narrow { width: 62px; }
  .tab.last { border-color: transparent; }
  .fav { width: 32px; height: 32px; }
  .tab-active { position: relative; margin: 16px 0 0 -1px; width: 63px; background: #fff; border-radius: 16px 16px 0 0; display: flex; align-items: center; justify-content: center; }
  .tab-active::before, .tab-active::after { content: ''; position: absolute; bottom: 0; width: 16px; height: 16px; }
  .tab-active::before { right: 100%; background: radial-gradient(circle at 0 0, transparent 15.500px, #fff 16px); }
  .tab-active::after { left: 100%; background: radial-gradient(circle at 100% 0, transparent 15.500px, #fff 16px); }
  .plus { margin: 38px 0 0 32px; }

  .toolbar { height: 72px; flex: none; display: flex; align-items: center; padding-left: 28px; }
  .toolbar > svg + svg { margin-left: 32px; }
  .omnibox { width: 2166px; height: 56px; margin-left: 28px; border-radius: 28px; background: #f1f3f4; box-sizing: border-box; padding: 0 21px 0 22px; display: flex; align-items: center; }
  .url { margin-left: 18px; margin-right: auto; font-size: 28px; color: #80868b; letter-spacing: -0.02px; }
  .url b { font-weight: 400; color: #202124; }
  .omnibox svg:last-child { margin-left: 34px; }
  .extensions { display: flex; gap: 32px; margin-left: 28px; }
  .rule { width: 2px; height: 32px; background: #d0d2d5; margin: 0 25px 0 28px; }
  .toolbar > svg.kebab { margin-left: 39px; }

  .bookmarks { height: 54px; flex: none; padding: 0 30px 11px 31px; border-bottom: 1px solid #b5b5b5; display: flex; align-items: center; font-size: 24px; color: #3c4043; letter-spacing: -0.08px; }
  .apps-label { margin: 0 33px 0 19px; }
  .bm { display: flex; align-items: center; gap: 15px; margin-right: 34px; }
  .folder { width: 32px; height: 26px; }
  .other { margin: 0 0 0 auto; border-left: 1px solid #dcdcdc; padding-left: 20px; height: 32px; }

  .app { flex: 1; display: flex; flex-direction: column; font-family: 'Open Sans', sans-serif; position: relative; }
  .app::after {
    content: ''; position: absolute; left: 0; right: 0; bottom: 0; height: 80px;
    background: linear-gradient(transparent, rgba(0, 0, 0, 0.02) 50%, rgba(0, 0, 0, 0.065));
    mask-image: linear-gradient(90deg, transparent, #000 110px, #000 2770px, transparent);
  }
  .caret { display: inline-block; border: 7px solid transparent; border-top: 8px solid #333; border-bottom: 0; }
  .account { height: 36px; flex: none; display: flex; align-items: center; justify-content: flex-end; gap: 17px; padding: 0 47px 3px 0; box-sizing: border-box; font-size: 24px; color: #8a8a8a; letter-spacing: -0.08px; }
  .account .caret { margin-left: -2px; }

  .titlebar { height: 120px; flex: none; background: #4489d2; color: #fff; display: flex; align-items: center; padding: 0 50px 0 32px; }
  h1 { margin: 0 0 1px 15.500px; font-size: 64.500px; line-height: 1; font-weight: 400; letter-spacing: 0.45px; white-space: nowrap; display: flex; align-items: center; }
  .chev { margin: 11px 19px 0 17px; }
  .actions { margin-left: auto; display: flex; gap: 44.500px; font-size: 30px; font-weight: 600; letter-spacing: 1.1px; }

  .alert { height: 68px; flex: none; box-sizing: border-box; padding-bottom: 4px; background: #fcead1; color: #333; display: flex; align-items: center; font-size: 24px; font-weight: 600; letter-spacing: -0.06px; }
  .alert.first { padding-left: 992px; margin-bottom: 4px; }
  .alert.second { padding-left: 1061px; }
  .alert svg { margin: 0 26px 2px 0; }
  .alert span { letter-spacing: -0.04px; }
  .alert a { margin-left: 87px; color: #f4a535; font-size: 26px; font-weight: 400; letter-spacing: 0.3px; }

  .body { flex: 1; display: flex; align-items: flex-start; padding-top: 36px; }
  aside { flex: none; width: 232px; height: 936px; box-sizing: content-box; border-right: 2px solid #e9e9e9; display: flex; flex-direction: column; }
  aside::before { content: ''; height: 8px; }
  aside a { height: 64px; line-height: 64px; text-align: right; padding-right: 28px; font-size: 32px; color: #4489d2; }
  aside a.current { color: #555; border-right: 4px solid #d9e6f7; padding-right: 24px; }
  .gap { height: 32px; }

  .content { margin-left: 64px; width: 2550px; }
  .buttons { display: flex; justify-content: flex-end; gap: 8px; height: 64px; }
  button { font: 400 30.600px 'Open Sans', sans-serif; border-radius: 4px; padding: 0 0 3px; box-sizing: border-box; }
  .outline { width: 438px; background: #fff; border: 2px solid #a5b3c4; color: #333; }
  .primary { width: 244px; background: #f4a735; border: 0; color: #fff; box-shadow: 0 2px 3px rgba(0, 0, 0, 0.28); }

  .cols { display: grid; align-items: center; grid-template-columns: 492px 308px 585px 156px 156.500px 156px 216.500px 1fr auto; height: 94px; padding: 0 32px; font-size: 28px; letter-spacing: -0.05px; color: #000; }
  .cols strong { font-size: 30.500px; font-weight: 600; letter-spacing: 0.08px; padding-bottom: 3px; white-space: nowrap; }
  .cols a { color: #4489d2; }
  .cols.head { height: 88px; box-sizing: border-box; padding: 15px 32px 0 48px; border-bottom: 2px solid #ccc; font-size: 24px; color: #555; }
  .head .caret { border-width: 9px 8px 0; border-top-color: #444; margin: 0 0 3px 2px; }
  .badge { justify-self: start; margin-left: 2px; width: 66px; height: 45px; line-height: 45px; text-align: center; background: #d5d7d8; color: #333; font-size: 23px; letter-spacing: -0.3px; }
  .cols .badge { margin-top: 1px; }
  .server { border-left: 16px solid #83c57c; border-bottom: 2px solid #ccc; padding-bottom: 2px; }
  .server:last-child { padding-bottom: 0; }
  .server.down { border-left-color: #d9646a; padding-bottom: 0; }
  .server p { margin: 0; height: 92px; line-height: 94px; padding-left: 31px; font-size: 28px; letter-spacing: -0.03px; color: #c9282d; }

  .desktop {
    flex: 1; padding: 0 78px; border-top: 2px solid #3c4043;
    background:
      linear-gradient(rgba(0, 0, 0, 0.4), transparent 80%),
      repeating-linear-gradient(178deg, rgba(0, 0, 0, 0.22) 0 2px, transparent 2px 7px, rgba(255, 200, 140, 0.07) 7px 9px, transparent 9px 13px),
      linear-gradient(90deg, #4c2e26, #3a251e 78px, #8a5a30 50%, #a8681c 2802px, #9a661c);
  }
  .dock {
    height: 122px; border-radius: 10px 10px 0 0; display: flex; padding-left: 8px;
    background:
      linear-gradient(rgba(90, 90, 90, 0.22), transparent 70%),
      linear-gradient(90deg, #8e736c, #a97a6c 150px, #c58672 330px, #cb8b76 480px, #c98e7b 560px, #d5c3c1 680px, #e0dee1 780px, #dcdadd 1900px, #d8d6da 2180px, #d3b9a4 2260px, #d08d4a 2360px, #bd8036 2460px, #a87f3e 2560px, #b9793a 2660px, #c77e34);
  }
  .slot { width: 98.600px; display: flex; flex-direction: column; align-items: center; }
  .icon { width: 80px; height: 80px; margin-top: 17px; filter: drop-shadow(0 2px 2px rgba(0, 0, 0, 0.3)); }
  .dot { width: 8px; height: 8px; border-radius: 50%; margin-top: 13px; }
  .dot.on { background: rgba(0, 0, 0, 0.7); }
  .divider { width: 2px; height: 90px; margin: 16px 19px 0 22px; background: #7a5420; }
</style>
